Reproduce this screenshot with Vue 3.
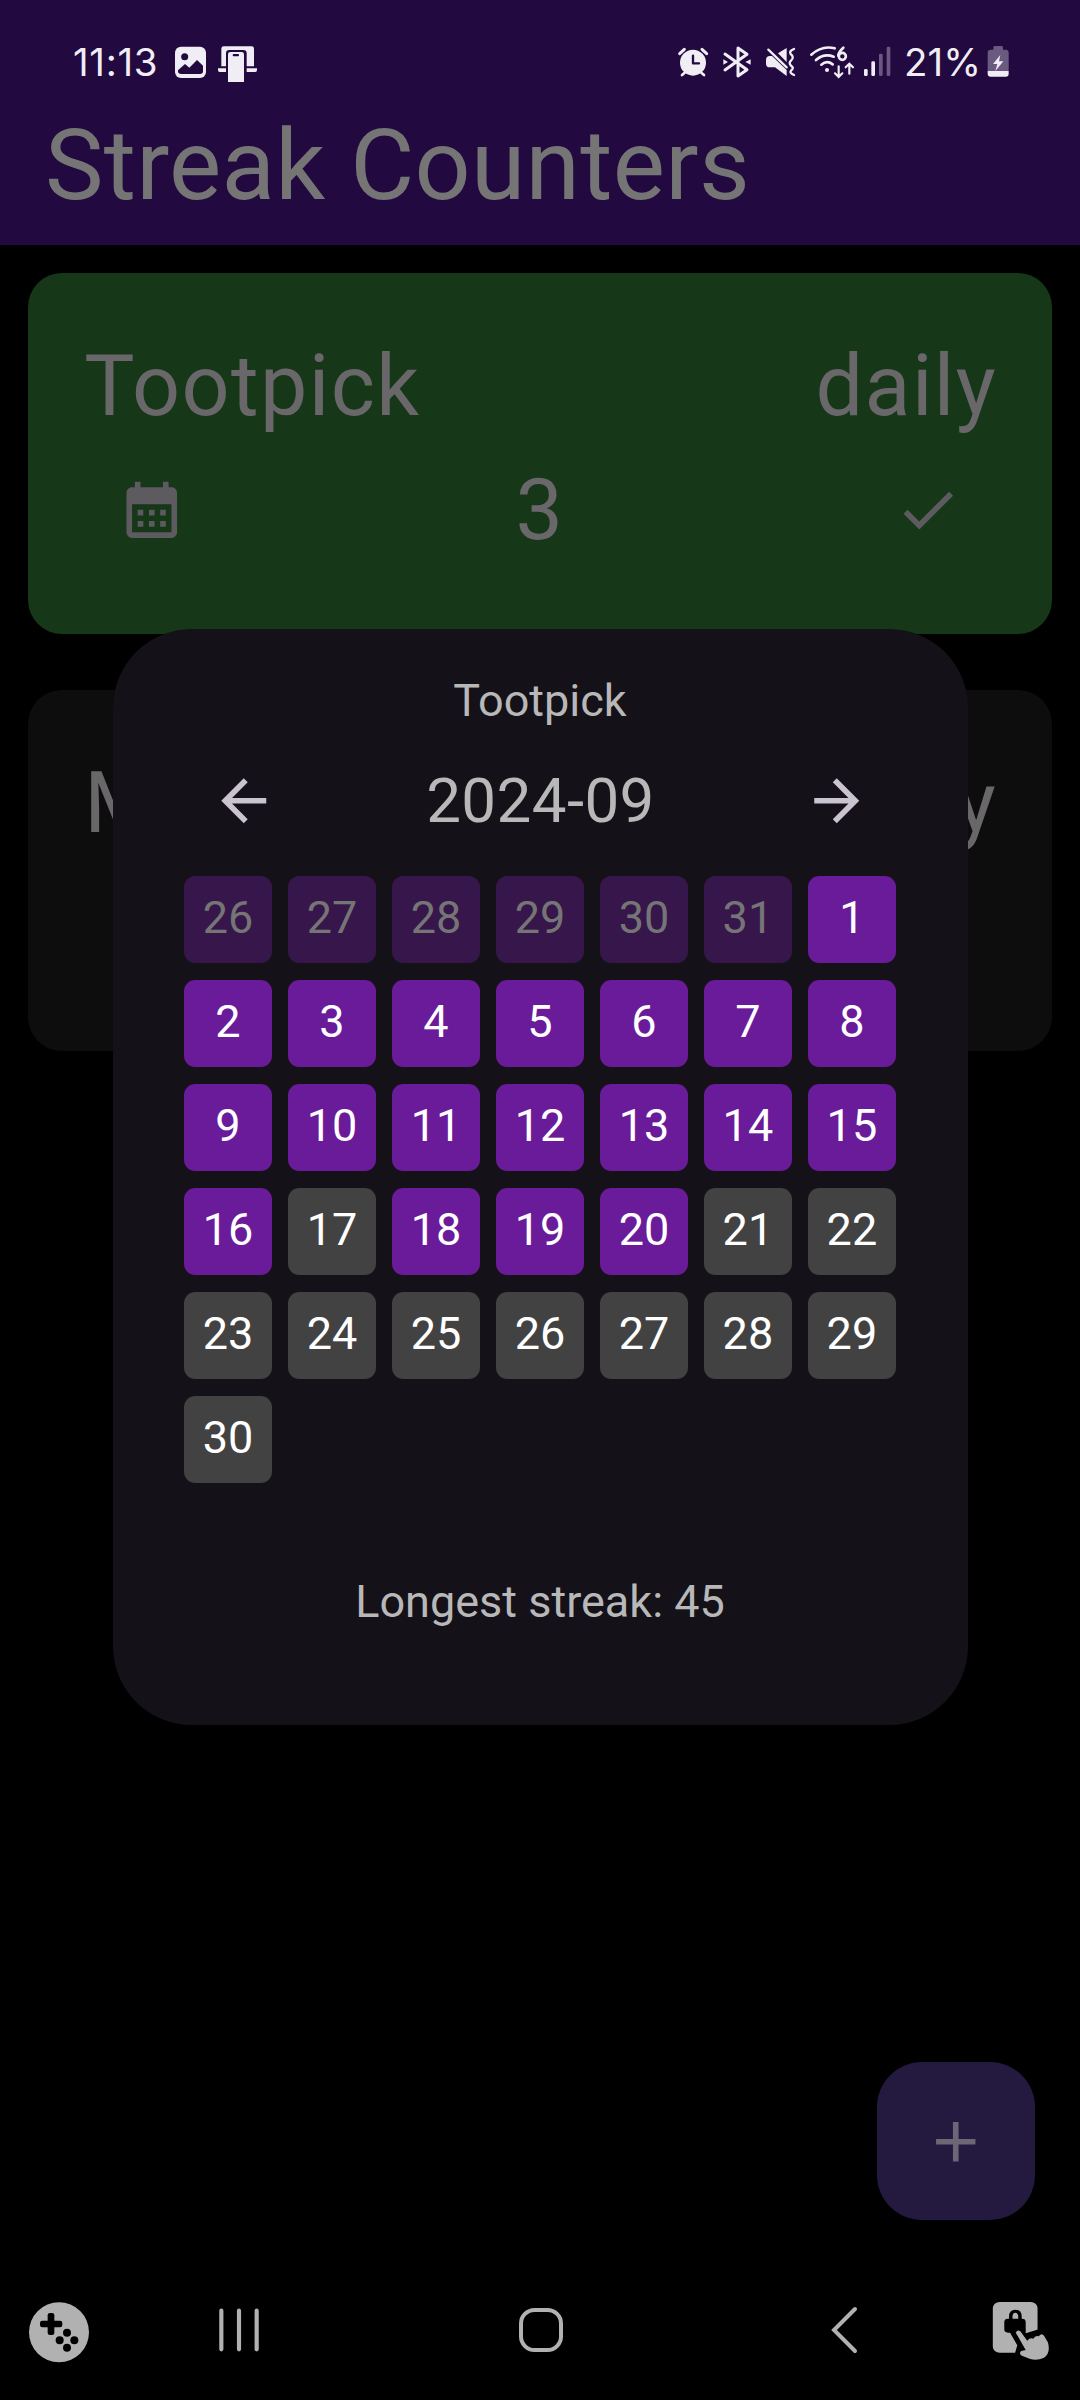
<script setup>
const leading = [26, 27, 28, 29, 30, 31].map((n) => ({ n, state: 'outside' }))
const missed = new Set([17, 21, 22, 23, 24, 25, 26, 27, 28, 29, 30])
const days = [
  ...leading,
  ...Array.from({ length: 30 }, (_, i) => ({ n: i + 1, state: missed.has(i + 1) ? 'missed' : 'done' })),
]
</script>

<template>
  <div class="screen">
    <header class="app-bar">
      <div class="status">
        <span class="clock">11:13</span>
        <svg width="40" height="70" viewBox="345 0 120 210">
          <rect x="345" y="50" width="93" height="94" rx="18" fill="#f0eef4" />
          <circle cx="374" cy="80" r="10.5" fill="#22093f" />
          <path d="M354 121L375 102L388 113L411 90L429 107V124Q429 132 420 132H364Q354 132 354 124Z" fill="#22093f" />
        </svg>
        <svg width="46" height="70" viewBox="465 0 138 210">
          <path d="M484 109V56Q484 49 491 49H575Q582 49 582 56V109H560V70Q560 60 550 60H508Q498 60 498 70V109Z" fill="#f0eef4" />
          <path d="M474 115H498V126H479Q474 126 474 120ZM560 115H591V120Q591 126 586 126H560Z" fill="#f0eef4" />
          <path d="M504 156V73Q504 66 511 66H545Q552 66 552 73V156Z" fill="#f0eef4" />
          <rect x="518" y="72" width="19" height="7" rx="3" fill="#22093f" />
        </svg>
        <div class="spacer"></div>
        <svg width="44" height="70" viewBox="40 0 132 210" fill="none" stroke="#f0eef4" stroke-linecap="round">
          <circle cx="97" cy="98" r="39" fill="#f0eef4" stroke="none" />
          <path d="M72 128L64 135M122 128L130 135" stroke-width="8" />
          <path d="M57 71L71 58M138 71L124 58" stroke-width="9" />
          <path d="M97 77V100H115" stroke="#22093f" stroke-width="7" stroke-linejoin="round" />
        </svg>
        <svg width="43" height="70" viewBox="172 0 129 210">
          <path d="M193 72L259 119L232 138V54L259 73L193 120" fill="none" stroke="#f0eef4" stroke-width="9" stroke-linejoin="round" stroke-linecap="round" />
          <path d="M188 88L202 96L188 104ZM270 88L254 96L270 104Z" fill="#f0eef4" />
        </svg>
        <svg width="43" height="70" viewBox="301 0 129 210">
          <path d="M316 90Q316 78 328 78H334L378 120V138L343 112H328Q316 112 316 101ZM352 70L378 54V96Z" fill="#f0eef4" />
          <path d="M323 59L378 112" stroke="#f0eef4" stroke-width="7" stroke-linecap="round" />
          <path d="M400 57Q384 63 390 72Q402 82 391 92Q383 99 391 107Q402 114 391 122Q385 129 400 135" fill="none" stroke="#f0eef4" stroke-width="7" stroke-linecap="round" />
        </svg>
        <svg width="57" height="70" viewBox="430 0 171 210" fill="none" stroke="#f0eef4" stroke-width="8" stroke-linecap="round">
          <path d="M452 74Q484 45 522 55M466 90Q490 69 519 80M482 104Q499 90 516 103" />
          <circle cx="499" cy="120" r="6" fill="#f0eef4" stroke="none" />
          <path d="M534 109V140M523 130L534 141L545 130M566 131V102M555 112L566 101L577 112" stroke-width="6.5" />
          <path d="M548 53Q533 66 533 77" stroke-width="8" />
          <circle cx="545" cy="79" r="10.5" stroke-width="8" />
        </svg>
        <svg width="43" height="70" viewBox="601 0 129 210" fill="#f0eef4">
          <rect x="610" y="117" width="11" height="21" rx="4" />
          <rect x="632" y="94" width="11" height="44" rx="4" />
          <rect x="655" y="71" width="11" height="67" rx="4" opacity=".35" />
          <rect x="678" y="50" width="11" height="88" rx="4" opacity=".35" />
        </svg>
        <span class="percent">21%</span>
        <svg width="30" height="70" viewBox="970 0 90 210">
          <path d="M981 123V68Q981 59 990 59H998V52Q998 48 1003 48H1022Q1027 48 1027 52V59H1035Q1044 59 1044 68V123Z" fill="#6b5a80" />
          <path d="M981 123H1044V131Q1044 140 1035 140H990Q981 140 981 131Z" fill="#f0eef4" />
          <path d="M1019 75L997 102H1010L1004 123L1028 94H1015Z" fill="#f0eef4" />
        </svg>
      </div>
      <h1 class="title">Streak Counters</h1>
    </header>

    <main class="cards">
      <section class="card green">
        <div class="card-head"><span>Tootpick</span><span>daily</span></div>
        <div class="card-row">
          <button class="icon-btn">
            <svg class="icon" viewBox="0 0 24 24"><path d="M19 4h-1V2h-2v2H8V2H6v2H5c-1.11 0-1.99.9-1.99 2L3 20a2 2 0 0 0 2 2h14c1.1 0 2-.9 2-2V6c0-1.1-.9-2-2-2zm0 16H5V10h14v10zM9 14H7v-2h2v2zm4 0h-2v-2h2v2zm4 0h-2v-2h2v2zm-8 4H7v-2h2v2zm4 0h-2v-2h2v2zm4 0h-2v-2h2v2z" /></svg>
          </button>
          <span>3</span>
          <button class="icon-btn">
            <svg class="icon" viewBox="0 0 24 24"><path d="M9 16.17L4.83 12l-1.42 1.41L9 19 21 7l-1.41-1.41z" /></svg>
          </button>
        </div>
      </section>
      <section class="card">
        <div class="card-head"><span>M</span><span>daily</span></div>
      </section>
    </main>

    <button class="fab">
      <svg class="icon" viewBox="0 0 24 24"><path d="M19 13h-6v6h-2v-6H5v-2h6V5h2v6h6v2z" /></svg>
    </button>

    <div class="dialog">
      <div class="dialog-title">Tootpick</div>
      <div class="month-row">
        <button class="icon-btn">
          <svg class="icon" viewBox="0 0 24 24"><path d="M20 11H7.83l5.59-5.59L12 4l-8 8 8 8 1.41-1.41L7.83 13H20v-2z" /></svg>
        </button>
        <span class="month">2024-09</span>
        <button class="icon-btn">
          <svg class="icon" viewBox="0 0 24 24"><path d="M12 4l-1.41 1.41L16.17 11H4v2h12.17l-5.58 5.59L12 20l8-8z" /></svg>
        </button>
      </div>
      <div class="grid">
        <div v-for="(d, i) in days" :key="i" class="day" :class="d.state">{{ d.n }}</div>
      </div>
      <div class="longest">Longest streak: 45</div>
    </div>

    <nav class="nav">
      <svg width="118" height="130" viewBox="0 0 354 390">
        <circle cx="177" cy="187" r="90" fill="#b1b1b1" />
        <rect x="120" y="152" width="67" height="20" rx="7" />
        <rect x="143" y="129" width="20" height="66" rx="7" />
        <circle cx="201" cy="188" r="12" /><circle cx="179" cy="211" r="12" /><circle cx="223" cy="211" r="12" /><circle cx="201" cy="233" r="12" />
      </svg>
      <svg class="recents" width="60" height="130" viewBox="627 0 180 390" stroke="#b1b1b1" stroke-width="12.5" stroke-linecap="round">
        <path d="M664 122V238M717 122V238M770 122V238" />
      </svg>
      <svg class="home" width="62" height="130" viewBox="0 0 62 130">
        <rect x="11" y="40" width="40" height="40" rx="13.5" fill="none" stroke="#b1b1b1" stroke-width="4" />
      </svg>
      <svg class="back" width="50" height="130" viewBox="0 0 50 130">
        <path d="M35 39L14 60L35 81" fill="none" stroke="#b1b1b1" stroke-width="4" stroke-linecap="round" />
      </svg>
      <svg class="touch" width="100" height="130" viewBox="1306.5 0 261.5 390" preserveAspectRatio="none">
        <rect x="1340" y="96" width="117" height="152" rx="18" fill="#b1b1b1" />
        <rect x="1370" y="146" width="56" height="42" rx="10" />
        <path d="M1387 152V140Q1387 124 1399 124Q1411 124 1411 140V152" fill="none" stroke="#000" stroke-width="9" />
        <path d="M1384 186L1404 226L1398 250H1460V178L1426 190V180Z" />
        <path d="M1400 188Q1404 177 1412 184L1430 212Q1437 202 1446 206Q1451 195 1460 199Q1468 187 1474 197L1484 217Q1492 248 1474 263Q1456 273 1438 267L1416 257Q1407 251 1414 243L1426 240Z" fill="#b1b1b1" />
      </svg>
    </nav>
  </div>
</template>

<style>
body {
  background: #000;
}
</style>

<style scoped>
.screen {
  position: relative;
  width: 1080px;
  height: 2400px;
  overflow: hidden;
  display: flex;
  flex-direction: column;
  background: #000;
  font-family: Roboto, 'Liberation Sans', sans-serif;
}
svg {
  display: block;
  flex: none;
}
button {
  border: 0;
  padding: 0;
  background: none;
  color: inherit;
}
.app-bar {
  height: 245.3px;
  flex: none;
  background: #22093f;
}
.status {
  display: flex;
  align-items: flex-start;
  height: 70px;
  padding: 30px 66px 0 73px;
  color: #f0eef4;
  font: 400 38.5px/64px Inter, sans-serif;
}
.clock {
  width: 102px;
  white-space: nowrap;
  letter-spacing: 0.7px;
}
.spacer {
  flex: 1;
}
.percent {
  width: 80px;
  white-space: nowrap;
}
.title {
  margin: 8px 0 0;
  padding-left: 45px;
  font-size: 98.44px;
  line-height: 116.6px;
  font-weight: 400;
  letter-spacing: 0.3px;
  color: #757575;
}
.cards {
  display: flex;
  flex-direction: column;
  gap: 56px;
  padding: 28.1px;
}
.card {
  box-sizing: border-box;
  height: 361px;
  padding: 56.25px;
  border-radius: 34px;
  background: #0d0d0e;
  color: #6a676a;
  font-size: 84.4px;
  letter-spacing: 1.4px;
}
.card.green {
  background: #163718;
}
.card-head {
  display: flex;
  justify-content: space-between;
  margin-right: -1.4px;
  line-height: 113px;
}
.card-row {
  display: flex;
  justify-content: space-between;
  align-items: center;
  height: 135px;
}
.icon-btn {
  display: flex;
  align-items: center;
  justify-content: center;
  width: 135px;
  height: 135px;
}
.icon {
  width: 67.5px;
  height: 67.5px;
  fill: currentColor;
}
.card .icon-btn {
  color: #5d5a60;
}
.fab {
  position: absolute;
  right: 45.4px;
  top: 2062.3px;
  width: 157.5px;
  height: 158px;
  border-radius: 45px;
  display: flex;
  align-items: center;
  justify-content: center;
  background: #241a40;
  color: #6c6675;
}
.dialog {
  position: absolute;
  left: 112.5px;
  top: 629px;
  width: 855px;
  height: 1095.5px;
  box-sizing: border-box;
  padding: 37.5px 64px 0;
  border-radius: 78.75px;
  background: #141118;
  color: #b8b8b9;
  font-size: 45px;
}
.dialog-title {
  text-align: center;
  line-height: 67.5px;
}
.month-row {
  display: flex;
  align-items: center;
  justify-content: space-between;
  height: 134px;
  margin-right: -1px;
}
.month-row .icon-btn {
  color: #cac4d0;
}
.month {
  font-size: 61.9px;
  letter-spacing: 0.4px;
}
.grid {
  display: grid;
  grid-template-columns: repeat(7, 87.4px);
  gap: 16.6px;
  margin: 8px 7.8px 0;
}
.day {
  box-sizing: border-box;
  height: 87.4px;
  padding-bottom: 4px;
  border-radius: 11.25px;
  line-height: 83.75px;
  text-align: center;
  color: #fff;
}
.day.done {
  background: #6a1b9a;
}
.day.missed {
  background: #424242;
}
.day.outside {
  background: #37164c;
  color: #757575;
}
.longest {
  margin-top: 84.3px;
  line-height: 68px;
  text-align: center;
}
.nav {
  display: flex;
  height: 130px;
  margin-top: auto;
}
.recents {
  margin-left: 91px;
}
.home {
  margin-left: 241px;
}
.back {
  margin-left: 248px;
}
.touch {
  margin-left: 110px;
}
</style>
